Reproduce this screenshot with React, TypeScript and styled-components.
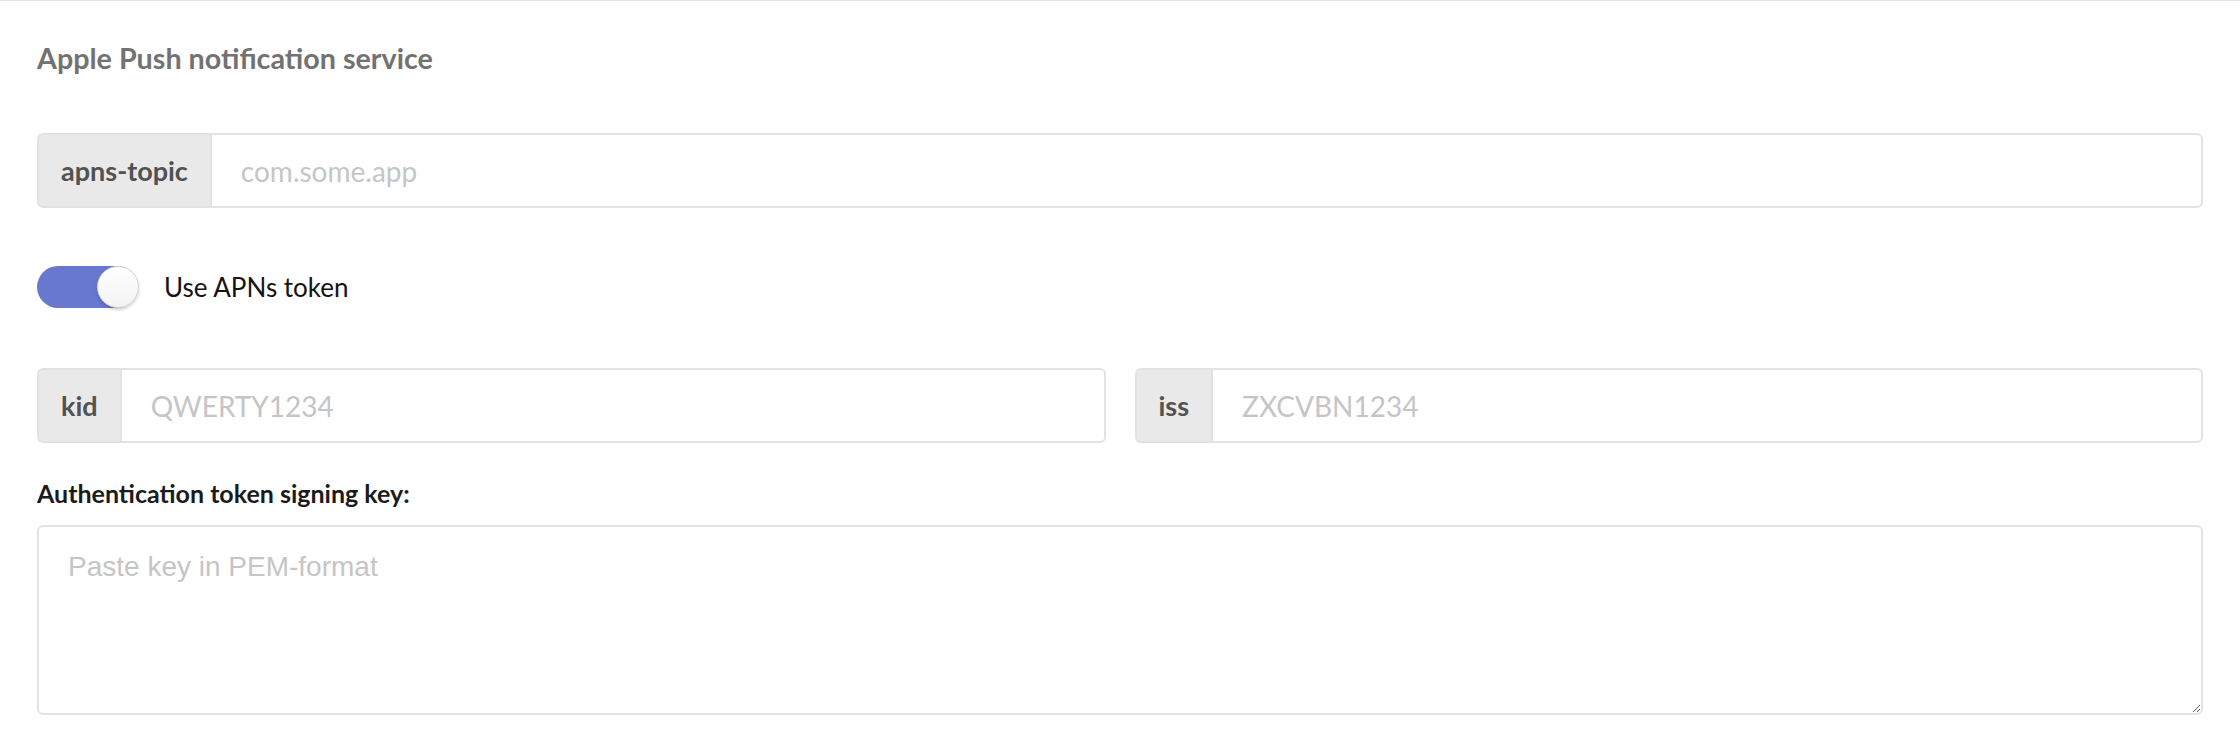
import React from 'react';
import styled, { createGlobalStyle } from 'styled-components';

const Global = createGlobalStyle`
  html, body { margin: 0; padding: 0; background: #ffffff; }
  body { font-family: Lato, "Noto Sans", sans-serif; }
  *, *::before, *::after { box-sizing: border-box; }
`;

const Panel = styled.section`
  border-top: 1px solid #e4e4e4;
  padding: 37px 37px 37px;
  width: 100%;
`;

const Title = styled.h3`
  margin: 0;
  font-size: 28.7px;
  line-height: 40px;
  font-weight: 700;
  color: #727272;
`;

const Group = styled.div<{ $mt?: number }>`
  display: flex;
  align-items: stretch;
  height: 75px;
  margin-top: ${(p) => p.$mt ?? 0}px;
  min-width: 0;
`;

const Addon = styled.span`
  display: flex;
  align-items: center;
  padding: 0 22px;
  background: #e9e9e9;
  border: 2px solid #e2e2e2;
  border-right: none;
  border-radius: 6px 0 0 6px;
  font-size: 27px;
  font-weight: 700;
  color: #525252;
  white-space: nowrap;
`;

const Input = styled.input`
  flex: 1;
  min-width: 0;
  border: 2px solid #e2e2e2;
  border-radius: 0 6px 6px 0;
  padding: 0 29px;
  font-family: Lato, "Noto Sans", sans-serif;
  font-size: 28px;
  color: #333;
  outline: none;
  &::placeholder { color: #c5c5c5; }
`;

const SwitchRow = styled.label`
  display: flex;
  align-items: center;
  gap: 26px;
  margin-top: 58px;
  height: 42px;
  cursor: pointer;
`;

const Track = styled.span<{ $on: boolean }>`
  position: relative;
  display: inline-block;
  width: 101px;
  height: 42px;
  border-radius: 21px;
  background: ${(p) => (p.$on ? '#6878cf' : '#d5d5d5')};
  flex-shrink: 0;
`;

const Thumb = styled.span<{ $on: boolean }>`
  position: absolute;
  top: 0;
  left: ${(p) => (p.$on ? '60px' : '0')};
  width: 42px;
  height: 42px;
  border-radius: 50%;
  background: linear-gradient(180deg, #ffffff 0%, #f3f3f3 100%);
  border: 1px solid #d4d4d4;
  box-shadow: 0 2px 3px rgba(0, 0, 0, 0.18);
`;

const SwitchLabel = styled.span`
  font-size: 26px;
  font-weight: 400;
  color: #141414;
`;

const Row = styled.div`
  display: grid;
  grid-template-columns: 1fr 1fr;
  gap: 29px;
  margin-top: 60px;
`;

const FieldLabel = styled.div`
  margin-top: 32px;
  font-size: 25px;
  line-height: 36px;
  font-weight: 700;
  color: #1b1b1b;
`;

const TextArea = styled.textarea`
  display: block;
  width: 100%;
  height: 190px;
  margin-top: 14px;
  padding: 20px 29px;
  border: 2px solid #e2e2e2;
  border-radius: 6px;
  font-family: "Liberation Sans", Arial, sans-serif;
  font-size: 28px;
  line-height: 40px;
  color: #333;
  outline: none;
  resize: vertical;
  &::placeholder { color: #c5c5c5; }
`;

function Field({ label, placeholder, mt }: { label: string; placeholder: string; mt?: number }) {
  return (
    <Group $mt={mt}>
      <Addon>{label}</Addon>
      <Input placeholder={placeholder} />
    </Group>
  );
}

export default function App() {
  const [on, setOn] = React.useState(true);
  return (
    <>
      <Global />
      <Panel>
        <Title>Apple Push notification service</Title>
        <Field label="apns-topic" placeholder="com.some.app" mt={55} />
        <SwitchRow onClick={() => setOn(!on)}>
          <Track $on={on}>
            <Thumb $on={on} />
          </Track>
          <SwitchLabel>Use APNs token</SwitchLabel>
        </SwitchRow>
        <Row>
          <Field label="kid" placeholder="QWERTY1234" />
          <Field label="iss" placeholder="ZXCVBN1234" />
        </Row>
        <FieldLabel>Authentication token signing key:</FieldLabel>
        <TextArea placeholder="Paste key in PEM-format" />
      </Panel>
    </>
  );
}
